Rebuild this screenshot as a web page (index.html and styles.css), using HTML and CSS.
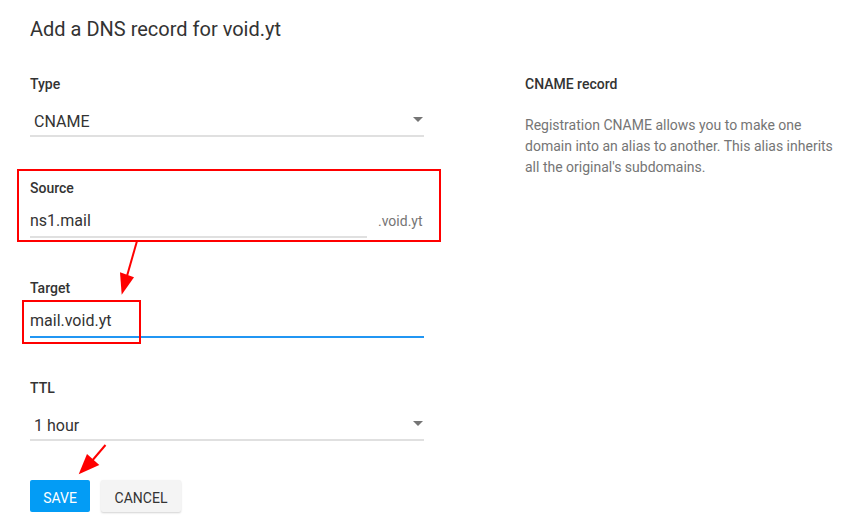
FILE: index.html
```html
<!DOCTYPE html>
<html lang="en">
<head>
<meta charset="utf-8">
<title>Add a DNS record</title>
<link rel="stylesheet" href="styles.css">
</head>
<body>
<div class="page">
  <h1 class="title">Add a DNS record for void.yt</h1>
  <div class="columns">
    <form class="form">
      <div class="field field-type">
        <div class="label">Type</div>
        <div class="select">
          <span class="value">CNAME</span>
          <span class="caret"></span>
        </div>
      </div>
      <div class="field field-gap field-source">
        <div class="label">Source</div>
        <div class="input-row">
          <div class="input"><span class="value">ns1.mail</span></div>
          <span class="suffix">.void.yt</span>
        </div>
      </div>
      <div class="field field-gap">
        <div class="label">Target</div>
        <div class="input input-focused"><span class="value">mail.void.yt</span></div>
      </div>
      <div class="field field-gap">
        <div class="label">TTL</div>
        <div class="select select-ttl">
          <span class="value">1 hour</span>
          <span class="caret"></span>
        </div>
      </div>
      <div class="actions">
        <button type="button" class="btn btn-primary">Save</button>
        <button type="button" class="btn btn-default">Cancel</button>
      </div>
    </form>
    <aside class="help">
      <div class="help-title">CNAME record</div>
      <p class="help-text">Registration CNAME allows you to make one domain into an alias to another. This alias inherits all the original's subdomains.</p>
    </aside>
  </div>
</div>
<div class="annot annot-source"></div>
<div class="annot annot-target"></div>
<svg class="arrows" width="862" height="532" viewBox="0 0 862 532" xmlns="http://www.w3.org/2000/svg">
  <line x1="137" y1="241" x2="127" y2="276" stroke="#ff0000" stroke-width="2"/>
  <polygon points="120,272.3 134,277.3 121.7,294.7" fill="#ff0000"/>
  <line x1="105.5" y1="445" x2="91" y2="462" stroke="#ff0000" stroke-width="2"/>
  <polygon points="87,454 99.3,465 78.7,474.3" fill="#ff0000"/>
</svg>
</body>
</html>
```
FILE: styles.css
```css
* { box-sizing: border-box; }
html, body { margin: 0; padding: 0; background: #fff; }
body {
  font-family: Roboto, "Liberation Sans", Arial, sans-serif;
  color: #333;
  width: 862px;
  height: 532px;
  overflow: hidden;
  position: relative;
}
.page { padding: 15px 0 0 30px; }
.title {
  margin: 0;
  font-size: 20px;
  line-height: 28px;
  font-weight: 400;
  color: #333;
}
.columns {
  display: flex;
  gap: 101px;
  margin-top: 31px;
}
.form { width: 394px; display: flex; flex-direction: column; }
.field { display: flex; flex-direction: column; }
.field-gap { margin-top: 40px; }
.field-source { margin-top: 41px; }
.label {
  font-size: 14px;
  line-height: 20px;
  font-weight: 500;
  color: #333;
}
.value { font-size: 16px; line-height: 24px; color: #333; }
.select {
  margin-top: 16px;
  display: flex;
  justify-content: space-between;
  align-items: center;
  padding: 0 0 1px 4px;
  border-bottom: 2px solid #e0e0e0;
}
.select-ttl { margin-top: 16px; }
.caret {
  width: 0; height: 0;
  border-left: 5px solid transparent;
  border-right: 5px solid transparent;
  border-top: 5px solid #757575;
  margin-right: 1px;
  margin-top: -6px;
}
.input-row {
  display: flex;
  align-items: baseline;
  gap: 11px;
}
.input {
  margin-top: 11px;
  padding-bottom: 3px;
  border-bottom: 2px solid #e0e0e0;
}
.input-row .input { flex: 0 0 337px; }
.suffix { font-size: 14px; color: #757575; }
.input-focused { border-bottom-color: #2196f3; }
.actions {
  margin-top: 39px;
  display: flex;
  gap: 11px;
}
.btn {
  height: 32px;
  border: 0;
  border-radius: 2px;
  font-family: inherit;
  font-size: 14px;
  text-transform: uppercase;
  padding: 4px 0 0;
  cursor: pointer;
}
.btn-primary { background: #039cf5; color: #fff; width: 60px; }
.btn-default {
  background: #f4f4f4;
  color: #333;
  width: 80px;
  box-shadow: 0 1px 2px rgba(0,0,0,0.18);
}
.help { width: 320px; }
.help-title {
  font-size: 14px;
  line-height: 20px;
  font-weight: 500;
  color: #333;
}
.help-text {
  margin: 21px 0 0;
  font-size: 14px;
  line-height: 21px;
  color: #757575;
}
.annot {
  position: absolute;
  border: 2px solid #ff0000;
}
.annot-source { left: 17px; top: 169px; width: 424px; height: 73px; }
.annot-target { left: 22px; top: 300px; width: 119px; height: 44px; }
.arrows { position: absolute; left: 0; top: 0; pointer-events: none; }
```
